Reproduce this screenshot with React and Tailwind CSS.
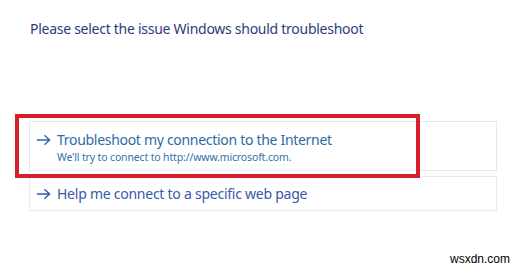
import React from 'react';

function Arrow({ className }) {
  return (
    <svg viewBox="0 0 16 12" className={className} fill="none" stroke="currentColor" strokeWidth="1.5">
      <path d="M1 6h13.5M9 1 14.5 6 9 11" />
    </svg>
  );
}

export default function App() {
  return (
    <div
      className="relative h-[270px] w-[528px] overflow-hidden bg-white"
      style={{ fontFamily: '"Noto Sans", "Open Sans", sans-serif' }}
    >
      <div className="pl-[30px] pt-[19px]">
        <h1 className="text-[14px] leading-[20px] tracking-[-0.27px] text-[#2b3d78]">
          Please select the issue Windows should troubleshoot
        </h1>
      </div>

      <div className="ml-[29px] mt-[82px] flex w-[468px] flex-col gap-[5px]">
        <button className="flex h-[50px] flex-col items-start border border-[#e3e9ef] px-[6px] pt-[8px] text-left">
          <div className="flex items-center gap-[6px] text-[#2c6aa6]">
            <Arrow className="h-[12px] w-[15px]" />
            <span className="text-[14px] leading-[20px] tracking-[-0.3px]">Troubleshoot my connection to the Internet</span>
          </div>
          <span className="pl-[21px] text-[10.5px] leading-[15px] tracking-[-0.15px] text-[#3470ad]">
            We'll try to connect to http://www.microsoft.com.
          </span>
        </button>

        <button className="flex h-[35px] items-center gap-[6px] border border-[#e6ebf0] px-[6px] text-left text-[#3a58a8]">
          <Arrow className="h-[12px] w-[15px]" />
          <span className="text-[14px] leading-[20px] tracking-[-0.25px]">Help me connect to a specific web page</span>
        </button>
      </div>

      <div className="pointer-events-none absolute left-[15px] top-[114px] h-[64px] w-[405px] border-[4px] border-[#d81e2a]" />

      <div
        className="absolute right-[18px] bottom-[2px] text-[12px] text-black"
        style={{ fontFamily: '"Liberation Sans", Arial, sans-serif' }}
      >
        wsxdn.com
      </div>
    </div>
  );
}
